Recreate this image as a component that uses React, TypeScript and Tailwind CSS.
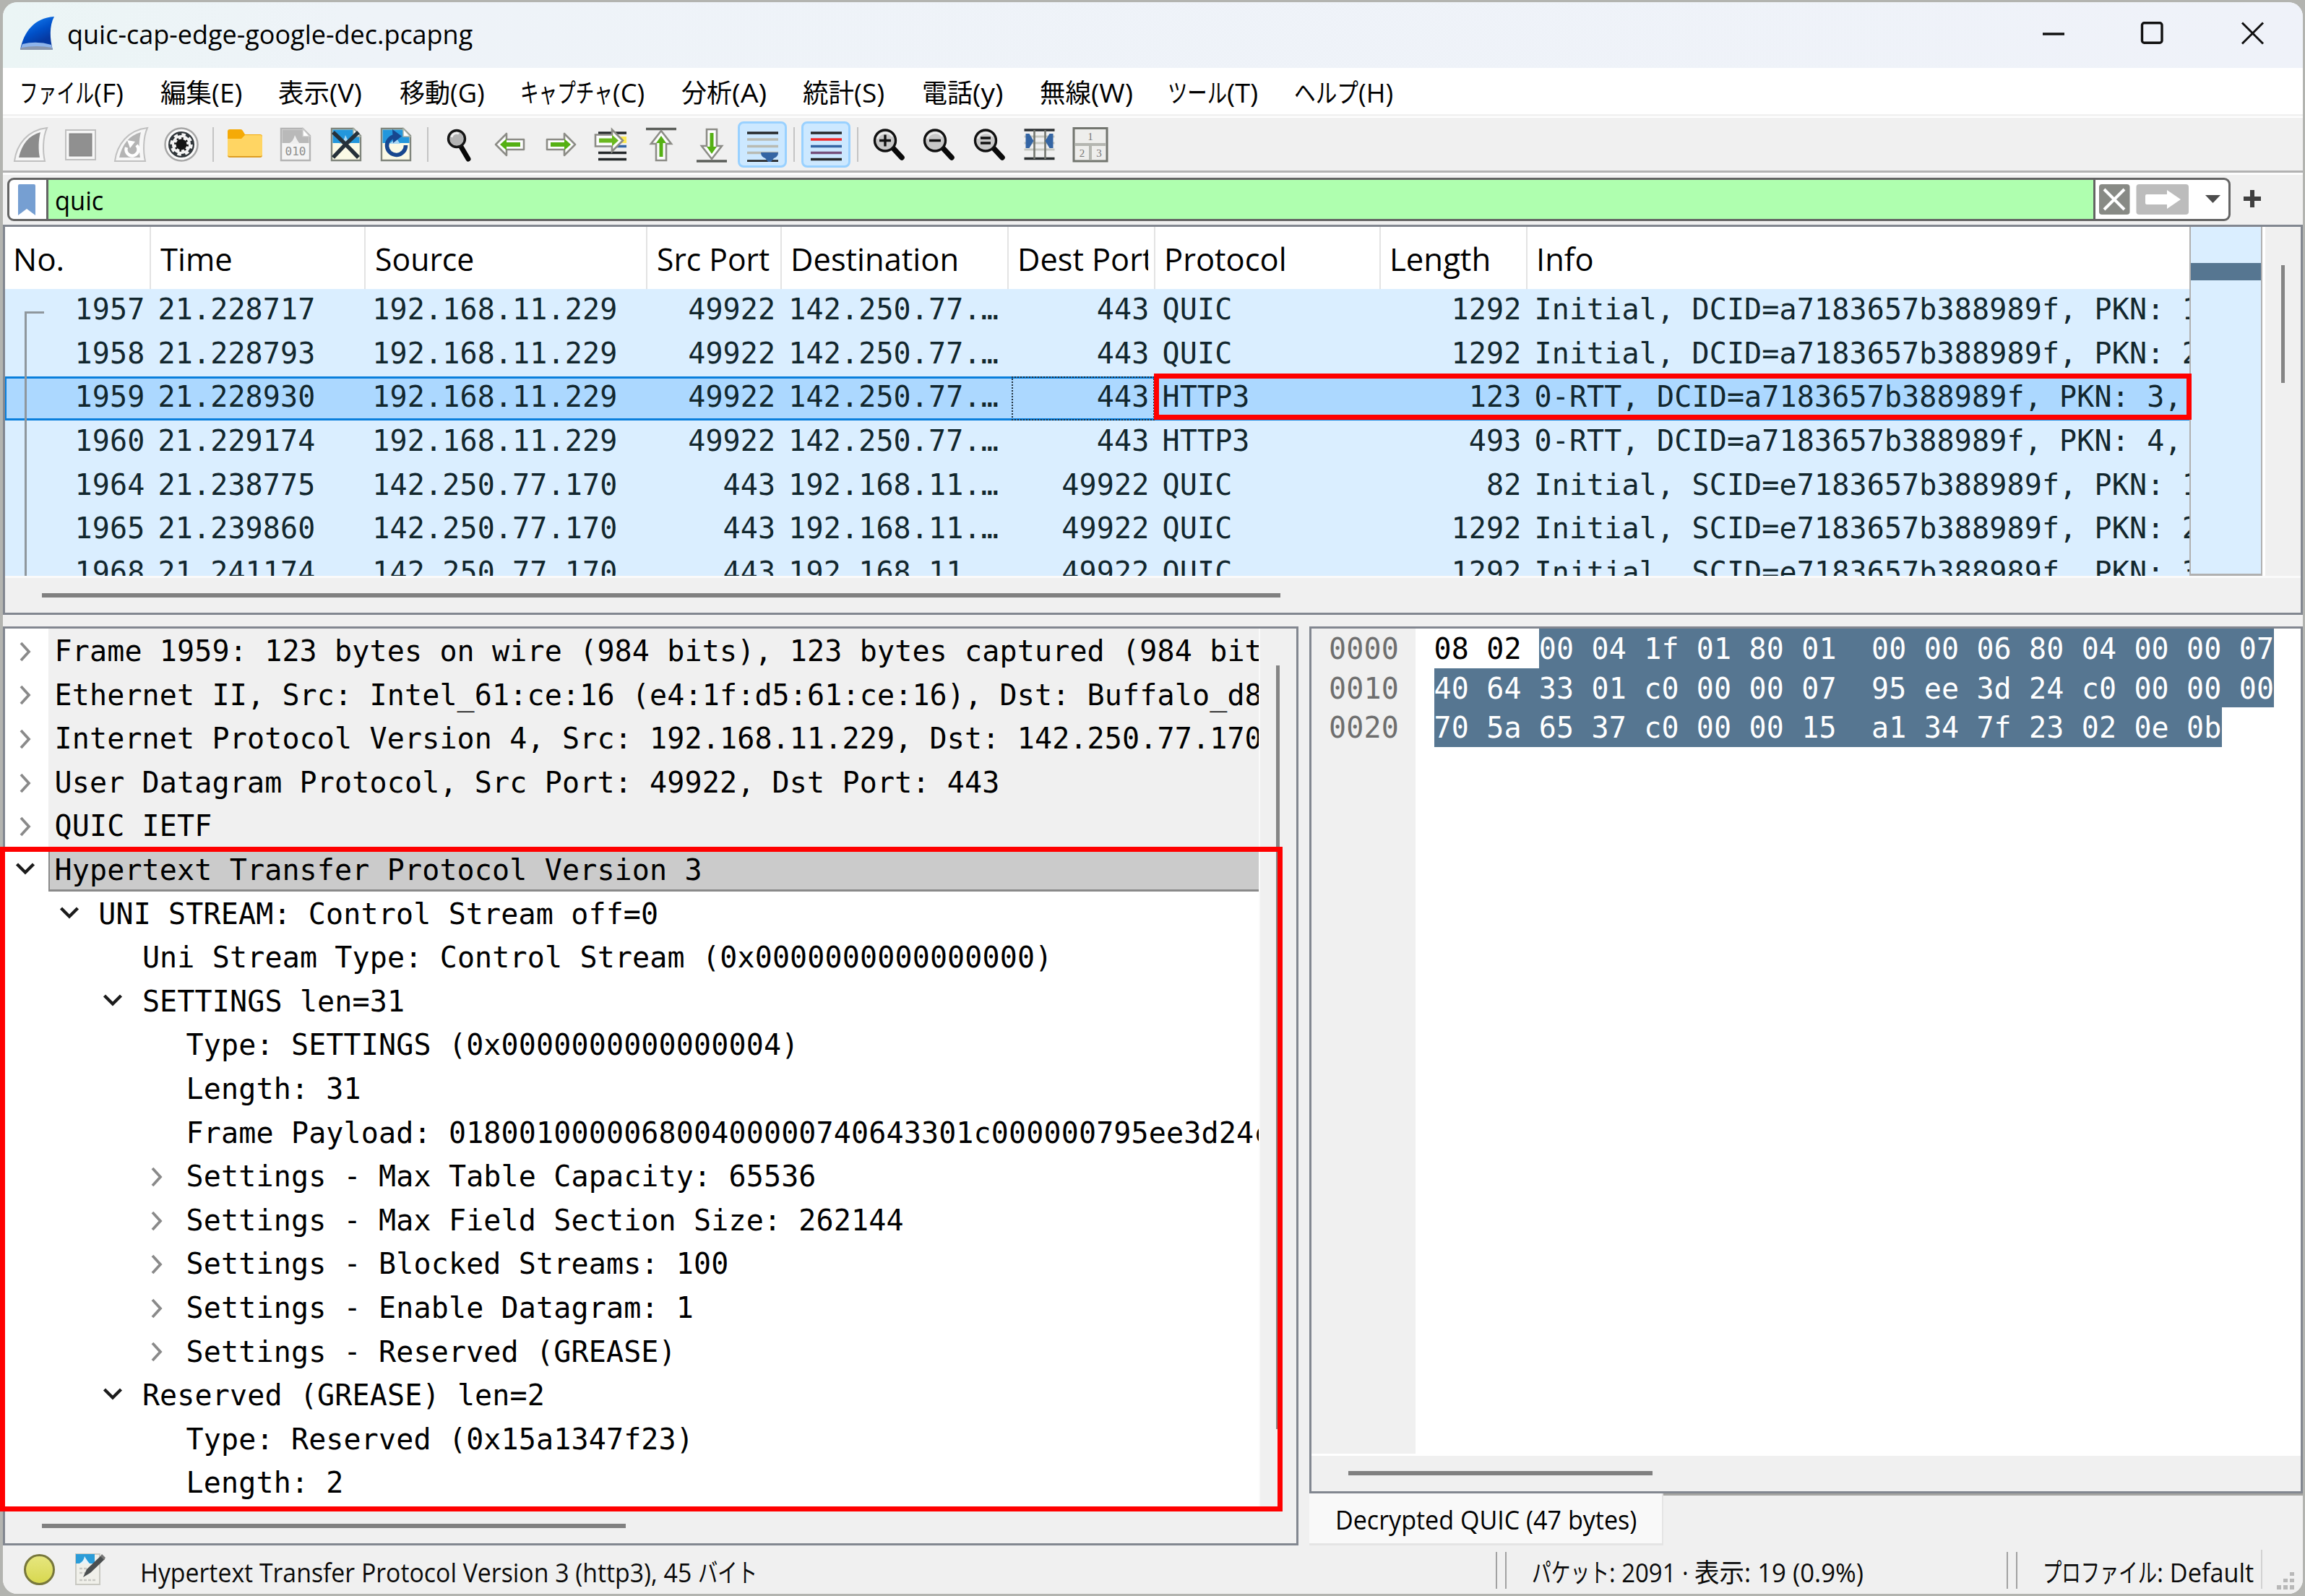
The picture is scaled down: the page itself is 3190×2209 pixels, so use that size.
import { useLayoutEffect, useRef, useState, type ReactNode } from "react";

/* Scales a run of text horizontally so that it fills the width of its box. */
function Fit({ className, children }: { className: string; children: ReactNode }) {
  const box = useRef<HTMLSpanElement>(null);
  const run = useRef<HTMLSpanElement>(null);
  const [scale, setScale] = useState(1);
  useLayoutEffect(() => {
    if (box.current && run.current) {
      setScale(box.current.clientWidth / run.current.offsetWidth);
    }
  }, [children]);
  return (
    <span ref={box} className={`block shrink-0 ${className}`}>
      <span
        ref={run}
        className="inline-block origin-left whitespace-pre align-top"
        style={{ transform: `scaleX(${scale})` }}
      >
        {children}
      </span>
    </span>
  );
}

const LATIN = "font-['Open_Sans','Noto_Sans',sans-serif]";
const JP = "font-['Noto_Sans_CJK_JP',sans-serif]";
const MONO = "font-['DejaVu_Sans_Mono','Liberation_Mono',monospace] text-[40px] tracking-[0.14px] whitespace-pre";

function TitleBar() {
  return (
    <div className="flex h-[91px] shrink-0 items-start bg-linear-to-r from-[#ebf5f5] via-[#eef3f8] via-15% to-[#eff2f9]">
      <svg className="mt-[19px] ml-[23px] h-[48px] w-[49px]" viewBox="0 0 49 48">
        <defs>
          <linearGradient id="fin" x1="0" y1="0" x2="0.5" y2="1">
            <stop offset="0" stopColor="#1a8cff" />
            <stop offset="0.55" stopColor="#0050c8" />
            <stop offset="0.85" stopColor="#0638a0" />
          </linearGradient>
        </defs>
        <path d="M1 47C6 22 20 3 48 1C41 14 42 32 46 47Z" fill="url(#fin)" />
        <path d="M1 47L4 39Q24 34 44 40L46 47Z" fill="#8fb4ea" />
        <path d="M1 47L2 44Q24 40 45 44L46 47Z" fill="#8a97ad" />
      </svg>
      <Fit className={`mt-[14px] ml-[17px] w-[561px] text-[37px] leading-[60px] text-black ${LATIN}`}>
        quic-cap-edge-google-dec.pcapng
      </Fit>
      <svg className="mt-[27px] ml-auto h-[32px] w-[308px]" viewBox="0 0 308 32" fill="none" stroke="#111">
        <path d="M1 17H31" strokeWidth="3.4" />
        <rect x="138.5" y="1.8" width="27.5" height="27.5" rx="3" strokeWidth="3.4" />
        <path d="M277 1.5L306 30.5M306 1.5L277 30.5" strokeWidth="3" />
      </svg>
      <div className="w-[53px] shrink-0" />
    </div>
  );
}

const MENUS = [
  { jp: "ファイル", key: "(F)", item: "w-[195px]", a: "w-[103px]", b: "w-[41px]" },
  { jp: "編集", key: "(E)", item: "w-[163px]", a: "w-[71px]", b: "w-[42px]" },
  { jp: "表示", key: "(V)", item: "w-[168px]", a: "w-[71px]", b: "w-[45px]" },
  { jp: "移動", key: "(G)", item: "w-[167px]", a: "w-[70px]", b: "w-[48px]" },
  { jp: "キャプチャ", key: "(C)", item: "w-[223px]", a: "w-[128px]", b: "w-[44px]" },
  { jp: "分析", key: "(A)", item: "w-[168px]", a: "w-[70px]", b: "w-[48px]" },
  { jp: "統計", key: "(S)", item: "w-[165px]", a: "w-[71px]", b: "w-[42px]" },
  { jp: "電話", key: "(y)", item: "w-[163px]", a: "w-[70px]", b: "w-[42px]" },
  { jp: "無線", key: "(W)", item: "w-[177px]", a: "w-[71px]", b: "w-[58px]" },
  { jp: "ツール", key: "(T)", item: "w-[175px]", a: "w-[82px]", b: "w-[43px]" },
  { jp: "ヘルプ", key: "(H)", item: "w-[175px]", a: "w-[89px]", b: "w-[48px]" },
];

function MenuBar() {
  return (
    <div className="flex h-[64px] shrink-0 bg-white pl-[23px] text-black">
      {MENUS.map((m) => (
        <div key={m.jp} className={`flex shrink-0 ${m.item}`}>
          <Fit className={`${m.a} ${JP} mt-[2px] text-[36px] leading-[60px]`}>{m.jp}</Fit>
          <Fit className={`${m.b} ${LATIN} mt-[4px] text-[37px] leading-[60px]`}>{m.key}</Fit>
        </div>
      ))}
    </div>
  );
}

function Icon({ children }: { children: ReactNode }) {
  return (
    <div className="flex w-[69.8px] shrink-0 justify-center">
      <svg className="h-[48px] w-[48px] overflow-visible" viewBox="0 0 48 48" fill="none">
        {children}
      </svg>
    </div>
  );
}

function Toggled({ children }: { children: ReactNode }) {
  return (
    <div className="flex w-[69.8px] shrink-0 justify-center">
      <div className="flex h-[64px] w-[68px] items-center justify-center rounded-[8px] border-[3px] border-[#99d1ff] bg-[#cce8ff]">
        <svg className="h-[48px] w-[48px] shrink-0" viewBox="0 0 48 48" fill="none">
          {children}
        </svg>
      </div>
    </div>
  );
}

const Sep = () => (
  <div className="flex w-[18px] shrink-0 justify-center">
    <div className="h-[48px] w-[2px] bg-[#c4c4c4]" />
  </div>
);

const ARROW = "M4 24L19 9V17H43V31H19V39Z";
const ARROW_IN = "M10 24L19 16V21H38V27H19V32Z";

function Arrow({ transform }: { transform?: string }) {
  return (
    <g transform={transform}>
      <path d={ARROW} fill="#fdfdfd" stroke="#8c8c86" strokeWidth="2.6" strokeLinejoin="round" />
      <path d={ARROW_IN} fill="#55b013" />
    </g>
  );
}

function Lens({ children }: { children?: ReactNode }) {
  return (
    <g transform="translate(-2 0)">
      <path d="M31 29L43 42" stroke="#0a0a0a" strokeWidth="7.5" strokeLinecap="round" />
      <circle cx="20" cy="18.500" r="14.500" fill="#c8c8c8" stroke="#111" strokeWidth="3.4" />
      <path d="M9 16A12 12 0 0 1 30 13" stroke="#ededed" strokeWidth="2.500" />
      <g stroke="#111" strokeWidth="3.4">{children}</g>
    </g>
  );
}

function Doc({ children, muted }: { children: ReactNode; muted?: boolean }) {
  return (
    <>
      <path
        d="M4 2H34L44 12V46H4Z"
        fill={muted ? "#f4f4f4" : "#fbfae6"}
        stroke={muted ? "#b4b4b4" : "#80857c"}
        strokeWidth="2.4"
      />
      <path d="M5.500 3.500H33L42.500 13V22H5.500Z" fill={muted ? "#b9b9b9" : "#2397dc"} />
      <path d="M14 23Q21 20 23 11Q27 20 30 23Z" fill={muted ? "#efefef" : "#a8d8f4"} />
      <path d="M34 2V13H44Z" fill="#fff" stroke={muted ? "#c8c8c8" : "#a9b4a8"} strokeWidth="1.5" />
      {children}
    </>
  );
}

function Toolbar() {
  return (
    <div className="flex h-[73px] shrink-0 items-center bg-[#f0f0f0] pl-[3px]">
      <Icon>
        <path d="M2 47C5 24 20 4 47 1C41 14 41 34 44 47Z" fill="#f6f6f6" stroke="#c0c0c0" strokeWidth="2" />
        <path d="M8 42C12 24 22 11 38 7C35 18 35 32 37 42Z" fill="#8c8c8c" />
      </Icon>
      <Icon>
        <rect x="3" y="4" width="41" height="41" fill="#f6f6f6" stroke="#c0c0c0" strokeWidth="2" />
        <rect x="8" y="9" width="31" height="31" fill="#909090" stroke="#7e7e7e" />
      </Icon>
      <Icon>
        <path d="M2 47C5 24 20 4 47 1C41 14 41 34 44 47Z" fill="#f6f6f6" stroke="#c0c0c0" strokeWidth="2" />
        <path d="M8 42C12 24 22 11 38 7C35 18 35 32 37 42Z" fill="#b4b4b4" />
        <path d="M18 28A8.500 8.500 0 1 0 32 25" stroke="#fff" strokeWidth="4.500" />
        <path d="M19 18L30 20L23 29Z" fill="#fff" />
      </Icon>
      <Icon>
        <circle cx="24" cy="24" r="22.500" fill="#fafafa" stroke="#a6a6a6" strokeWidth="2.500" />
        <circle cx="24" cy="24" r="18" fill="#30363a" />
        <circle cx="24" cy="24" r="13" fill="#f4f4f4" />
        <circle cx="24" cy="24" r="14" stroke="#f4f4f4" strokeWidth="3.500" strokeDasharray="5.500 5.496" />
        <circle cx="24" cy="24" r="7.500" fill="#151515" />
        <circle cx="24" cy="24" r="8.500" stroke="#151515" strokeWidth="3" strokeDasharray="2.500 4.176" />
      </Icon>
      <Sep />
      <Icon>
        <path d="M0 6Q0 3 3 3H18Q20 3 21 5L24 10H45Q48 10 48 13V20H0Z" fill="#f5aa07" />
        <path d="M0 16H19L24 11H45Q48 11 48 14V39Q48 42 45 42H3Q0 42 0 39Z" fill="#ffd563" />
        <path d="M0 38Q0 42 3 42H45Q48 42 48 38Q48 40 45 40H3Q0 40 0 38Z" fill="#dd9c22" />
      </Icon>
      <Icon>
        <Doc muted>
          <text x="24" y="39" textAnchor="middle" fontSize="16" fontFamily="DejaVu Sans Mono" fill="#8e8e8e">
            010
          </text>
        </Doc>
      </Icon>
      <Icon>
        <Doc>
          <path d="M6 7Q22 22 41 42M41 7Q22 24 6 42" stroke="#26313a" strokeWidth="5.500" />
        </Doc>
      </Icon>
      <Icon>
        <Doc>
          <path d="M37.500 25A13 13 0 1 1 23 12.500" stroke="#17478f" strokeWidth="5.500" />
          <path d="M19 3L32 12.500L20 22Z" fill="#17478f" />
        </Doc>
      </Icon>
      <Sep />
      <Icon>
        <path d="M26 27L36 44" stroke="#080808" strokeWidth="7" strokeLinecap="round" />
        <circle cx="20" cy="16" r="11.500" fill="#b4b4b4" stroke="#161616" strokeWidth="3.400" />
        <path d="M13 14A7 7 0 0 1 23 9" stroke="#f2f2f2" strokeWidth="3" />
      </Icon>
      <Icon>
        <Arrow />
      </Icon>
      <Icon>
        <Arrow transform="matrix(-1 0 0 1 48 0)" />
      </Icon>
      <Icon>
        <path d="M6 8H45M6 35.500H45M6 44.500H45" stroke="#25292b" strokeWidth="3.400" />
        <path d="M30 17.500H45" stroke="#fce94f" strokeWidth="9" />
        <path d="M30 26.500H45" stroke="#3465a4" strokeWidth="3.400" />
        <g transform="translate(44 -4.500) scale(-1 1)">
          <path d="M4 23L19 8V15H42V31H19V38Z" fill="#fdfdfd" stroke="#8c8c86" strokeWidth="2.600" />
          <path d="M10 23L19 15V20H37V26H19V31Z" fill="#6ab81f" />
        </g>
      </Icon>
      <Icon>
        <path d="M3 2.500H45" stroke="#5b5e5a" strokeWidth="3.400" />
        <path d="M24 5L38 23H31V46H17V23H10Z" fill="#fdfdfd" stroke="#8c8c86" strokeWidth="2.600" />
        <path d="M24 12L31 22H26.500V41H21.500V22H17Z" fill="#55b013" />
      </Icon>
      <Icon>
        <path d="M3 47H45" stroke="#5b5e5a" strokeWidth="3.400" />
        <path d="M24 44L38 26H31V3H17V26H10Z" fill="#fdfdfd" stroke="#8c8c86" strokeWidth="2.600" />
        <path d="M24 37L31 27H26.500V8H21.500V27H17Z" fill="#55b013" />
      </Icon>
      <Toggled>
        <path d="M3 8H46M3 47H46" stroke="#26292b" strokeWidth="3.400" />
        <path d="M3 17H46M3 26.500H46M3 35.500H46" stroke="#b9bbb3" strokeWidth="3.400" />
        <path d="M22 35H46Q46 41 40 43L36 48H32L28 43Q22 41 22 35Z" fill="#3465a4" />
      </Toggled>
      <Sep />
      <Toggled>
        <path d="M3 8H46M3 44.500H46" stroke="#26292b" strokeWidth="3.400" />
        <path d="M3 17H46" stroke="#ef2929" strokeWidth="3.400" />
        <path d="M3 26.500H46" stroke="#3465a4" strokeWidth="3.400" />
        <path d="M3 35.500H46" stroke="#75507b" strokeWidth="3.400" />
      </Toggled>
      <Sep />
      <Icon>
        <Lens>
          <path d="M12 18.500H28M20 10.500V26.500" />
        </Lens>
      </Icon>
      <Icon>
        <Lens>
          <path d="M12 18.500H28" />
        </Lens>
      </Icon>
      <Icon>
        <Lens>
          <path d="M13 15H27M13 22H27" />
        </Lens>
      </Icon>
      <Icon>
        <g transform="translate(-1.500 0)">
          <path d="M3 4H45M3 43.500H45" stroke="#2b2f31" strokeWidth="3.400" />
          <path d="M3 13H45M3 22H45M3 31H45" stroke="#c6c8c1" strokeWidth="3" />
          <path d="M17 4V44M32 4V44" stroke="#73766f" strokeWidth="2.600" />
          <path d="M5 9L10 9L16 19L10 29L5 29Z" fill="#3465a4" />
          <path d="M43 9L38 9L32 19L38 29L43 29Z" fill="#3465a4" />
        </g>
      </Icon>
      <Icon>
        <g transform="translate(-1 0)">
          <rect x="1" y="1.500" width="46" height="45.500" fill="#eeeeec" stroke="#72756f" strokeWidth="3" />
          <path d="M2 24H46M24 24V46" stroke="#b4b6b0" strokeWidth="4" />
          <g fontSize="15" fontFamily="Liberation Serif" fill="#777" textAnchor="middle">
            <text x="24" y="18">1</text>
            <text x="12.500" y="41">2</text>
            <text x="36" y="41">3</text>
          </g>
        </g>
      </Icon>
    </div>
  );
}

function FilterBar() {
  return (
    <div className="flex h-[69px] shrink-0 items-start bg-[#f0f0f0] pt-[4px] pl-[6px]">
      <div className="flex h-[60px] w-[3077px] shrink-0 overflow-hidden rounded-[9px] border-[3px] border-[#646464] bg-white">
        <div className="flex w-[54px] shrink-0 items-center border-r-[3px] border-[#646464] pl-[12px]">
          <svg className="h-[43px] w-[24px]" viewBox="0 0 24 43">
            <path d="M0 2Q0 0 2 0H22Q24 0 24 2V43L12 34L0 43Z" fill="#769fd2" />
          </svg>
        </div>
        <div className="flex w-[2833px] shrink-0 border-r-[3px] border-[#646464] bg-[#afffaf] pt-px pl-[9px]">
          <Fit className={`w-[67px] ${LATIN} text-[37px] leading-[54px] text-black`}>quic</Fit>
        </div>
        <svg className="h-[54px] w-[184px] shrink-0" viewBox="0 0 184 54" fill="none">
          <rect x="5" y="6" width="42.500" height="42" rx="4" fill="#888a85" />
          <path d="M12 13L40 41M40 13L12 41" stroke="#fff" strokeWidth="4" />
          <rect x="56.500" y="6" width="72.500" height="42" rx="4" fill="#bcbcbc" />
          <path d="M69 22Q69 20 71 20H99V14L118 27L99 40V34H71Q69 34 69 32Z" fill="#fff" />
          <path d="M152 21H173L162.500 32Z" fill="#4c4c4c" />
        </svg>
      </div>
      <svg className="mt-[16px] ml-[17px] h-[26px] w-[26px]" viewBox="0 0 26 26">
        <path d="M1 13H25M13 1V25" stroke="#3f3f3f" strokeWidth="6" />
      </svg>
    </div>
  );
}

const COLS = [
  "w-[202px]",
  "w-[296.8px]",
  "w-[390.6px]",
  "w-[185.4px]",
  "w-[314.6px]",
  "w-[202.6px]",
  "w-[312.4px]",
  "w-[202.6px]",
  "w-[916px]",
];

const HEADS: [string, string, string][] = [
  ["No.", "w-[71px]", "pl-[11px]"],
  ["Time", "w-[100px]", "pl-[13px]"],
  ["Source", "w-[137px]", "pl-[13px]"],
  ["Src Port", "w-[156px]", "pl-[13px]"],
  ["Destination", "w-[233px]", "pl-[12px]"],
  ["Dest Port", "w-[188px]", "pl-[12px]"],
  ["Protocol", "w-[170px]", "pl-[12px]"],
  ["Length", "w-[140px]", "pl-[12px]"],
  ["Info", "w-[80px]", "pl-[12px]"],
];

const OUT = ["192.168.11.229", "49922", "142.250.77.…", "443"];
const IN = ["142.250.77.170", "443", "192.168.11.…", "49922"];
const PACKETS: string[][] = [
  ["1957", "21.228717", ...OUT, "QUIC", "1292", "Initial, DCID=a7183657b388989f, PKN: 1"],
  ["1958", "21.228793", ...OUT, "QUIC", "1292", "Initial, DCID=a7183657b388989f, PKN: 2"],
  ["1959", "21.228930", ...OUT, "HTTP3", "123", "0-RTT, DCID=a7183657b388989f, PKN: 3,"],
  ["1960", "21.229174", ...OUT, "HTTP3", "493", "0-RTT, DCID=a7183657b388989f, PKN: 4,"],
  ["1964", "21.238775", ...IN, "QUIC", "82", "Initial, SCID=e7183657b388989f, PKN: 1"],
  ["1965", "21.239860", ...IN, "QUIC", "1292", "Initial, SCID=e7183657b388989f, PKN: 2"],
  ["1968", "21.241174", ...IN, "QUIC", "1292", "Initial, SCID=e7183657b388989f, PKN: 3"],
];
const RIGHT = [0, 3, 5, 7];

function PacketList() {
  return (
    <div className="flex h-[540px] shrink-0 flex-col border-[3px] border-[#828790] bg-[#f0f0f0]">
      <div className="flex h-[483px] shrink-0">
        <div className="relative flex w-[3023px] shrink-0 flex-col overflow-hidden bg-[#daeeff]">
          <div className="flex h-[86px] shrink-0 bg-white">
            {HEADS.map(([label, w, pad], i) => (
              <div
                key={label}
                className={`shrink-0 overflow-hidden ${COLS[i]} ${pad} ${i === 8 ? "" : "border-r-2 border-[#e3e3e3]"} ${i === 5 ? "pr-[8px]" : ""}`}
              >
                <div className="overflow-hidden">
                  <Fit className={`${w} ${LATIN} text-[44px] leading-[88px] text-black`}>{label}</Fit>
                </div>
              </div>
            ))}
          </div>
          {PACKETS.map((p) => {
            const selected = p[0] === "1959";
            return (
              <div
                key={p[0]}
                className={`flex h-[60.64px] shrink-0 text-[#12272e] ${selected ? "bg-[#acd8ff] shadow-[inset_0_3px_0_#0a7fdc,inset_0_-3px_0_#0a7fdc,inset_2px_0_0_#0a7fdc]" : ""}`}
              >
                {p.map((v, i) => (
                  <div
                    key={i}
                    className={`shrink-0 overflow-hidden ${COLS[i]} ${MONO} leading-[57px] ${RIGHT.includes(i) ? "pr-[8.5px] text-right" : "pl-[9.5px]"}`}
                  >
                    {v}
                  </div>
                ))}
              </div>
            );
          })}
          <div className="absolute top-[117px] left-[27px] h-[400px] w-[27px] border-t-[3px] border-l-[3px] border-[#8f979d]" />
          <div className="absolute top-[207px] left-[1393px] h-[61px] w-[198px] border-[2px] border-dotted border-[#20303c]" />
        </div>
        <div className="flex h-[483px] w-[101px] shrink-0 flex-col border-x-[2px] border-b-[3px] border-[#b0b0b0] bg-[#daeeff] pt-[50px]">
          <div className="h-[24px] bg-[#567691]" />
        </div>
        <div className="h-full flex-1 border-l-[4px] border-white pt-[53px] pl-[22px]">
          <div className="h-[163px] w-[5px] bg-[#858585]" />
        </div>
      </div>
      <div className="border-t-[3px] border-[#fafafa] pt-[21px] pl-[51px]">
        <div className="h-[6px] w-[1714px] bg-[#808080]" />
      </div>
    </div>
  );
}

type Node = { level: number; text: string; state?: "open" | "closed"; shade?: boolean; selected?: boolean };
const TREE: Node[] = [
  { level: 0, state: "closed", shade: true, text: "Frame 1959: 123 bytes on wire (984 bits), 123 bytes captured (984 bits)" },
  { level: 0, state: "closed", shade: true, text: "Ethernet II, Src: Intel_61:ce:16 (e4:1f:d5:61:ce:16), Dst: Buffalo_d8:" },
  { level: 0, state: "closed", shade: true, text: "Internet Protocol Version 4, Src: 192.168.11.229, Dst: 142.250.77.170" },
  { level: 0, state: "closed", shade: true, text: "User Datagram Protocol, Src Port: 49922, Dst Port: 443" },
  { level: 0, state: "closed", shade: true, text: "QUIC IETF" },
  { level: 0, state: "open", selected: true, text: "Hypertext Transfer Protocol Version 3" },
  { level: 1, state: "open", text: "UNI STREAM: Control Stream off=0" },
  { level: 2, text: "Uni Stream Type: Control Stream (0x0000000000000000)" },
  { level: 2, state: "open", text: "SETTINGS len=31" },
  { level: 3, text: "Type: SETTINGS (0x0000000000000004)" },
  { level: 3, text: "Length: 31" },
  { level: 3, text: "Frame Payload: 018001000006800400000740643301c000000795ee3d24c0" },
  { level: 3, state: "closed", text: "Settings - Max Table Capacity: 65536" },
  { level: 3, state: "closed", text: "Settings - Max Field Section Size: 262144" },
  { level: 3, state: "closed", text: "Settings - Blocked Streams: 100" },
  { level: 3, state: "closed", text: "Settings - Enable Datagram: 1" },
  { level: 3, state: "closed", text: "Settings - Reserved (GREASE)" },
  { level: 2, state: "open", text: "Reserved (GREASE) len=2" },
  { level: 3, text: "Type: Reserved (0x15a1347f23)" },
  { level: 3, text: "Length: 2" },
];
const INDENT = ["pl-0", "pl-[60.7px]", "pl-[121.4px]", "pl-[182.1px]"];

function DetailPane() {
  return (
    <div className="flex h-[1272px] w-[1793px] shrink-0 flex-col border-[3px] border-[#828790] bg-[#f0f0f0]">
      <div className="flex h-[1215px] shrink-0">
        <div className="w-[1735px] shrink-0 overflow-hidden bg-white">
          {TREE.map((n, i) => (
            <div key={i} className={`flex h-[60.6px] ${INDENT[n.level]}`}>
              <div className="flex w-[60px] shrink-0 items-center pl-[13px]">
                {n.state === "closed" && (
                  <svg className="mt-[3px] h-[28px] w-[30px]" viewBox="0 0 30 28" fill="none">
                    <path d="M9 2L20 14L9 26" stroke="#8a8a8a" strokeWidth="3.8" />
                  </svg>
                )}
                {n.state === "open" && (
                  <svg className="h-[28px] w-[30px]" viewBox="0 0 30 28" fill="none">
                    <path d="M3.500 7L15 18.500L26.500 7" stroke="#1c1c1c" strokeWidth="4.4" />
                  </svg>
                )}
              </div>
              <div
                className={`min-w-0 flex-1 overflow-hidden pl-[8.5px] text-black ${MONO} leading-[63px] ${n.shade ? "bg-[#f0f0f0]" : ""} ${n.selected ? "bg-[#cbcbcb] shadow-[inset_2px_0_0_#8a8a8a,inset_0_-3px_0_#8a8a8a]" : ""}`}
              >
                {n.text}
              </div>
            </div>
          ))}
        </div>
        <div className="flex-1 border-l-2 border-[#fafafa] pt-[51px] pl-[22px]">
          <div className="h-[1057px] w-[5px] bg-[#858585]" />
        </div>
      </div>
      <div className="pt-[24px] pl-[51px]">
        <div className="h-[6px] w-[808px] bg-[#808080]" />
      </div>
    </div>
  );
}

const HEX: [string, string, string][] = [
  ["0000", "08 02 ", "00 04 1f 01 80 01  00 00 06 80 04 00 00 07"],
  ["0010", "", "40 64 33 01 c0 00 00 07  95 ee 3d 24 c0 00 00 00"],
  ["0020", "", "70 5a 65 37 c0 00 00 15  a1 34 7f 23 02 0e 0b"],
];

function BytesPane() {
  return (
    <div className="flex h-[1272px] w-[1375px] shrink-0 flex-col">
      <div className="flex h-[1200px] shrink-0 flex-col border-[3px] border-[#828790] bg-[#f0f0f0]">
        <div className="flex h-[1145px] shrink-0 bg-white">
          <div className="mb-[3px] w-[144px] shrink-0 bg-[#f0f0f0] pl-[24px] text-[#6e6e6e]">
            {HEX.map(([off]) => (
              <div key={off} className={`h-[54.5px] ${MONO} leading-[57px]`}>
                {off}
              </div>
            ))}
          </div>
          <div className="flex-1 pl-[25.5px]">
            {HEX.map(([off, plain, lit]) => (
              <div key={off} className={`flex h-[54.5px] ${MONO} leading-[57px]`}>
                <span className="text-black">{plain}</span>
                <span className="bg-[#567691] text-white">{lit}</span>
              </div>
            ))}
          </div>
        </div>
        <div className="pt-[21px] pl-[51px]">
          <div className="h-[6px] w-[421px] bg-[#808080]" />
        </div>
      </div>
      <div className="flex">
        <div className="h-[72px] w-[490px] border-r-2 border-b-[3px] border-[#e4e4e4] bg-[#f9f9f9] pt-px pl-[36px]">
          <Fit className={`w-[417px] ${LATIN} text-[37px] leading-[70px] text-black`}>Decrypted QUIC (47 bytes)</Fit>
        </div>
        <div className="h-[3px] flex-1 bg-[#a5a5a2]" />
      </div>
    </div>
  );
}

const Grip = ({ className }: { className: string }) => (
  <div className={`mt-[9px] flex h-[51px] w-[15px] shrink-0 justify-between border-x-[2.500px] border-[#a2a2a2] ${className}`} />
);

function StatusBar() {
  const jp = `${JP} mt-[-1px] text-[36px] leading-[72px]`;
  const la = `${LATIN} mt-[3px] text-[36px] leading-[70px]`;
  return (
    <div className="flex h-[67px] shrink-0 items-start bg-[#f0f0f0] text-[#0a0a0a]">
      <div className="mt-[12px] ml-[29px] h-[43px] w-[43px] shrink-0 rounded-full border-[3px] border-[#77773c] bg-linear-to-b from-[#e6e67e] to-[#d8d84e]" />
      <svg className="mt-[11px] ml-[28px] h-[44px] w-[42px] shrink-0" viewBox="0 0 42 44" fill="none">
        <path d="M1 1H34V43H1Z" fill="#f0f0ea" stroke="#c9c9c2" strokeWidth="2" />
        <path d="M1 1H27V14H1Z" fill="#2b9cd8" />
        <path d="M6 14Q12 11 13 4Q17 11 20 14Z" fill="#e6f3fa" />
        <path d="M6 21H24M6 27H16M6 37H28" stroke="#c9c9c4" strokeWidth="2.500" strokeDasharray="4 2" />
        <path d="M16 22L36 3L41 8L21 27L11 33Z" fill="#4b4f50" />
        <path d="M35 4L37 1L42 6L40 9Z" fill="#777" />
      </svg>
      <Fit className={`ml-[48px] w-[772px] ${la}`}>Hypertext Transfer Protocol Version 3 (http3), 45 </Fit>
      <Fit className={`w-[82px] ${jp}`}>バイト</Fit>
      <Grip className="ml-[1022px]" />
      <Fit className={`ml-[35px] w-[107px] ${jp}`}>パケット</Fit>
      <Fit className={`w-[118px] ${la}`}>: 2091 · </Fit>
      <Fit className={`w-[69px] ${jp}`}>表示</Fit>
      <Fit className={`w-[165px] ${la}`}>: 19 (0.9%)</Fit>
      <Grip className="ml-[198px]" />
      <Fit className={`ml-[35px] w-[158px] ${jp}`}>プロファイル</Fit>
      <Fit className={`w-[134px] ${la}`}>: Default</Fit>
      <div className="mt-[6px] ml-[10px] h-[54px] w-[2px] shrink-0 bg-[#d2d2d2]" />
      <svg className="mt-[37px] ml-[20px] h-[24px] w-[26px] shrink-0" viewBox="0 0 26 24" fill="#b8b8b8">
        <path d="M18 0h6v5h-6zM9 9h6v5H9zM18 9h6v5h-6zM0 18h6v6H0zM9 18h6v6H9zM18 18h6v6h-6z" />
      </svg>
    </div>
  );
}

export default function App() {
  return (
    <div className="relative h-[2209px] w-[3190px] overflow-hidden bg-[#b3b4b0] pt-[3px] pl-[4px]">
      <div className="flex h-[2203px] w-[3183px] flex-col overflow-hidden rounded-[20px] bg-[#f0f0f0]">
        <TitleBar />
        <MenuBar />
        <div className="h-[3px] shrink-0 bg-[#f2f2f2]" />
        <div className="h-[2px] shrink-0 bg-white" />
        <Toolbar />
        <div className="h-[3px] shrink-0 bg-[#b2b2b2]" />
        <div className="h-[3px] shrink-0 bg-[#fcfcfc]" />
        <FilterBar />
        <PacketList />
        <div className="h-[16px] shrink-0" />
        <div className="flex shrink-0 justify-between">
          <DetailPane />
          <BytesPane />
        </div>
        <StatusBar />
      </div>
      <div className="absolute top-[517px] left-[1597px] h-[64px] w-[1436px] border-[7px] border-[#ff0000]" />
      <div className="absolute top-[1172px] left-0 h-[920px] w-[1775px] border-[7px] border-[#ff0000]" />
    </div>
  );
}
